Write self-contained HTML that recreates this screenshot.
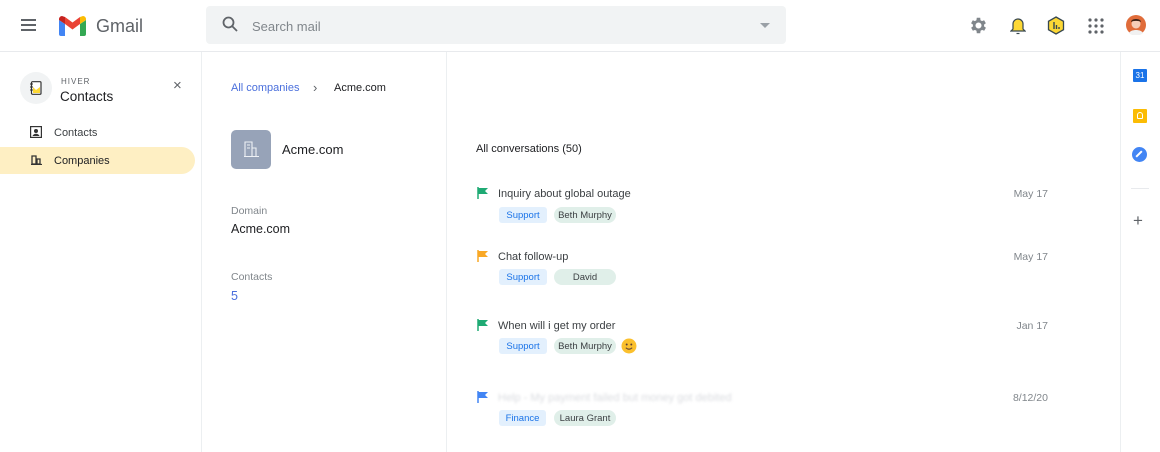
<!DOCTYPE html>
<html><head><style>
*{margin:0;padding:0;box-sizing:border-box}
body{width:1160px;height:452px;overflow:hidden;background:#fff;font-family:"Liberation Sans",Arial,sans-serif;color:#202124;position:relative}
.a{position:absolute}
.t{font-size:11px;color:#3c4043}
.chip{position:absolute;height:16px;font-size:9.5px;line-height:17px;text-align:center;border-radius:3px}
.sup{background:#e3f0fd;color:#1a73e8}
.nm{background:#e0efe9;color:#3c4043;border-radius:8px}
.date{position:absolute;left:1000px;width:48px;text-align:right;font-size:10.5px;color:#80868b}
</style></head><body>
<div class="a" style="left:0;top:51px;width:1160px;height:1px;background:#e8eaed"></div>
<div class="a" style="left:21px;top:19px;width:15px;height:2px;background:#5f6368;box-shadow:0 5px 0 #5f6368,0 10px 0 #5f6368"></div>
<svg class="a" style="left:59px;top:16px" width="27" height="20" viewBox="0 0 27 20">
<path d="M0 4v14a2 2 0 0 0 2 2h4V8z" fill="#4285f4"/><path d="M21 8v12h4a2 2 0 0 0 2-2V4z" fill="#34a853"/>
<path d="M6 8l7.5 5.5L21 8V1l-7.5 5.5L6 1z" fill="#ea4335"/><path d="M0 4l6 4V1L3 0C1.5 0 0 1.5 0 3z" fill="#c5221f"/><path d="M21 1v7l6-4V3c0-1.5-1.5-3-3-3z" fill="#fbbc04"/></svg>
<div class="a" style="left:96px;top:16px;font-size:18px;color:#5f6368">Gmail</div>
<div class="a" style="left:206px;top:6px;width:580px;height:38px;background:#f1f3f4;border-radius:4px"></div>
<svg class="a" style="left:222px;top:16px" width="16" height="16" viewBox="0 0 16 16"><circle cx="6.5" cy="6.5" r="5" fill="none" stroke="#5f6368" stroke-width="1.8"/><path d="M10 10l5 5" stroke="#5f6368" stroke-width="1.8"/></svg>
<div class="a" style="left:252px;top:19px;font-size:13px;color:#80868b">Search mail</div>
<div class="a" style="left:760px;top:23px;border:5px solid transparent;border-top:5px solid #9aa0a6"></div>
<svg class="a" style="left:969px;top:16px" width="19" height="19" viewBox="2 1 22 22"><path fill="#80868b" d="M19.4 13a7.5 7.5 0 0 0 0-2l2.1-1.6-2-3.5-2.5 1a7 7 0 0 0-1.7-1L15 3h-4l-.4 2.9a7 7 0 0 0-1.7 1l-2.5-1-2 3.5L6.6 11a7.5 7.5 0 0 0 0 2l-2.1 1.6 2 3.5 2.5-1a7 7 0 0 0 1.7 1L11 21h4l.4-2.9a7 7 0 0 0 1.7-1l2.5 1 2-3.5zM13 15.5a3.5 3.5 0 1 1 0-7 3.5 3.5 0 0 1 0 7z"/></svg>
<svg class="a" style="left:1010px;top:16px" width="16" height="19" viewBox="0 0 16 19"><path d="M3 13V8a5 5 0 0 1 10 0v5l2 2H1z" fill="#fdd835" stroke="#37474f" stroke-width="1.2"/><path d="M6.5 17.5h3" stroke="#37474f" stroke-width="1.2"/></svg>
<svg class="a" style="left:1047px;top:16px" width="18" height="19" viewBox="0 0 18 19"><path d="M9 1l7.5 4.3v8.4L9 18l-7.5-4.3V5.3z" fill="#fdd835" stroke="#37474f" stroke-width="1.3"/><path d="M7 6v7M9.5 9v4M12 11v2" stroke="#37474f" stroke-width="1.4"/></svg>
<svg class="a" style="left:1088px;top:18px" width="16" height="16"><g fill="#5f6368"><circle cx="2" cy="2" r="1.6"/><circle cx="8" cy="2" r="1.6"/><circle cx="14" cy="2" r="1.6"/><circle cx="2" cy="8" r="1.6"/><circle cx="8" cy="8" r="1.6"/><circle cx="14" cy="8" r="1.6"/><circle cx="2" cy="14" r="1.6"/><circle cx="8" cy="14" r="1.6"/><circle cx="14" cy="14" r="1.6"/></g></svg>
<svg class="a" style="left:1126px;top:15px" width="20" height="20" viewBox="0 0 20 20"><circle cx="10" cy="10" r="10" fill="#e06c3a"/><circle cx="10" cy="9" r="4.5" fill="#f5cdb8"/><path d="M5 7c0-4 10-4 10 0-2-1.5-8-1.5-10 0z" fill="#3e2419"/><path d="M3 18c2-4 12-4 14 0a10 10 0 0 1-14 0z" fill="#f1f1f1"/></svg>
<div class="a" style="left:201px;top:52px;width:1px;height:400px;background:#eceff1"></div>
<div class="a" style="left:20px;top:72px;width:32px;height:32px;border-radius:50%;background:#f1f3f4"></div>
<svg class="a" style="left:30px;top:81px" width="12" height="14" viewBox="0 0 12 14"><rect x="1.5" y="0.7" width="9.5" height="12.6" rx="1" fill="#fff" stroke="#333" stroke-width="1.2"/><path d="M3 6l3 3 4-3v6H3z" fill="#fdd835"/><path d="M0 3h3M0 6h3M0 9h3" stroke="#333"/></svg>
<div class="a" style="left:61px;top:77px;font-size:8px;letter-spacing:1px;color:#5f6368">HIVER</div>
<div class="a" style="left:60px;top:89px;font-size:13.5px;color:#202124">Contacts</div>
<div class="a" style="left:173px;top:79px;font-size:15px;color:#5f6368;line-height:14px">×</div>
<svg class="a" style="left:30px;top:126px" width="12" height="12" viewBox="0 0 12 12"><rect x=".6" y=".6" width="10.8" height="10.8" fill="none" stroke="#333" stroke-width="1.2"/><circle cx="6" cy="5" r="2" fill="#333"/><path d="M2.5 10c1-3 6-3 7 0z" fill="#333"/></svg>
<div class="a t" style="left:54px;top:127px">Contacts</div>
<div class="a" style="left:0;top:147px;width:195px;height:27px;background:#feefc3;border-radius:0 14px 14px 0"></div>
<svg class="a" style="left:31px;top:155px" width="11" height="10" viewBox="0 0 11 10"><path d="M1 1h4v8H1zM6 4h3v5H6zM0 9.5h11" fill="none" stroke="#333" stroke-width="1.3"/></svg>
<div class="a t" style="left:54px;top:155px;color:#202124">Companies</div>
<div class="a" style="left:446px;top:52px;width:1px;height:400px;background:#eceff1"></div>
<div class="a" style="left:231px;top:82px;font-size:11px;color:#4a6fdc">All companies</div>
<div class="a" style="left:313px;top:80px;font-size:13px;color:#5f6368">›</div>
<div class="a" style="left:334px;top:82px;font-size:11px;color:#202124">Acme.com</div>
<div class="a" style="left:231px;top:130px;width:40px;height:39px;border-radius:5px;background:#97a3b8"></div>
<svg class="a" style="left:243px;top:140px" width="17" height="18" viewBox="0 0 17 18"><path d="M2 16V2h7v14M9 8h4v8M1 16.5h15M4 5h3M4 8h3" fill="none" stroke="#eef1f5" stroke-width="1.1"/></svg>
<div class="a" style="left:282px;top:142px;font-size:13px;color:#202124">Acme.com</div>
<div class="a" style="left:231px;top:205px;font-size:10.5px;color:#80868b">Domain</div>
<div class="a" style="left:231px;top:222px;font-size:12.5px;color:#202124">Acme.com</div>
<div class="a" style="left:231px;top:271px;font-size:10.5px;color:#80868b">Contacts</div>
<div class="a" style="left:231px;top:289px;font-size:12.5px;color:#4a6fdc">5</div>
<div class="a" style="left:476px;top:143px;font-size:11px;color:#202124">All conversations (50)</div>

<svg class="a" style="left:477px;top:187px" width="11" height="12"><path d="M1 0v12" stroke="#1faa74" stroke-width="1.5"/><path d="M1 1h10l-3 3 3 3H1z" fill="#1faa74"/></svg>
<div class="a t" style="left:498px;top:188px">Inquiry about global outage</div>
<div class="date" style="top:188px">May 17</div>
<div class="chip sup" style="left:499px;top:207px;width:48px">Support</div>
<div class="chip nm" style="left:554px;top:207px;width:62px">Beth Murphy</div>

<svg class="a" style="left:477px;top:250px" width="11" height="12"><path d="M1 0v12" stroke="#f9a825" stroke-width="1.5"/><path d="M1 1h10l-3 3 3 3H1z" fill="#f9a825"/></svg>
<div class="a t" style="left:498px;top:251px">Chat follow-up</div>
<div class="date" style="top:251px">May 17</div>
<div class="chip sup" style="left:499px;top:269px;width:48px">Support</div>
<div class="chip nm" style="left:554px;top:269px;width:62px">David</div>

<svg class="a" style="left:477px;top:319px" width="11" height="12"><path d="M1 0v12" stroke="#1faa74" stroke-width="1.5"/><path d="M1 1h10l-3 3 3 3H1z" fill="#1faa74"/></svg>
<div class="a t" style="left:498px;top:320px">When will i get my order</div>
<div class="date" style="top:320px">Jan 17</div>
<div class="chip sup" style="left:499px;top:338px;width:48px">Support</div>
<div class="chip nm" style="left:554px;top:338px;width:62px">Beth Murphy</div>
<svg class="a" style="left:621px;top:338px" width="16" height="16" viewBox="0 0 16 16"><circle cx="8" cy="8" r="7.5" fill="#fbc02d"/><circle cx="5.7" cy="6.5" r="1" fill="#5d4037"/><circle cx="10.3" cy="6.5" r="1" fill="#5d4037"/><path d="M4.8 9.8q3.2 2.8 6.4 0" fill="none" stroke="#5d4037" stroke-width="1"/></svg>

<svg class="a" style="left:477px;top:391px" width="11" height="12"><path d="M1 0v12" stroke="#4285f4" stroke-width="1.5"/><path d="M1 1h10l-3 3 3 3H1z" fill="#4285f4"/></svg>
<div class="a t" style="left:498px;top:392px;color:#dadce0;filter:blur(1.2px)">Help - My payment failed but money got debited</div>
<div class="date" style="top:392px">8/12/20</div>
<div class="chip sup" style="left:499px;top:410px;width:47px">Finance</div>
<div class="chip nm" style="left:554px;top:410px;width:62px">Laura Grant</div>
<div class="a" style="left:1120px;top:52px;width:1px;height:400px;background:#eceff1"></div>
<div class="a" style="left:1133px;top:69px;width:14px;height:13px;background:#1a73e8;border-radius:1px;color:#fff;font-size:8px;text-align:center;line-height:13px">31</div>
<div class="a" style="left:1133px;top:109px;width:14px;height:14px;background:#fbbc04;border-radius:1px"></div>
<div class="a" style="left:1137px;top:112px;width:6px;height:7px;border:1px solid #fff;border-radius:3px 3px 1px 1px"></div>
<div class="a" style="left:1132px;top:147px;width:15px;height:15px;background:#4285f4;border-radius:50%"></div>
<div class="a" style="left:1138px;top:150px;width:2px;height:8px;background:#fff;transform:rotate(45deg)"></div>
<div class="a" style="left:1131px;top:188px;width:18px;height:1px;background:#e8eaed"></div>
<div class="a" style="left:1133px;top:214px;font-size:17px;color:#5f6368;line-height:14px">+</div>
</body></html>
